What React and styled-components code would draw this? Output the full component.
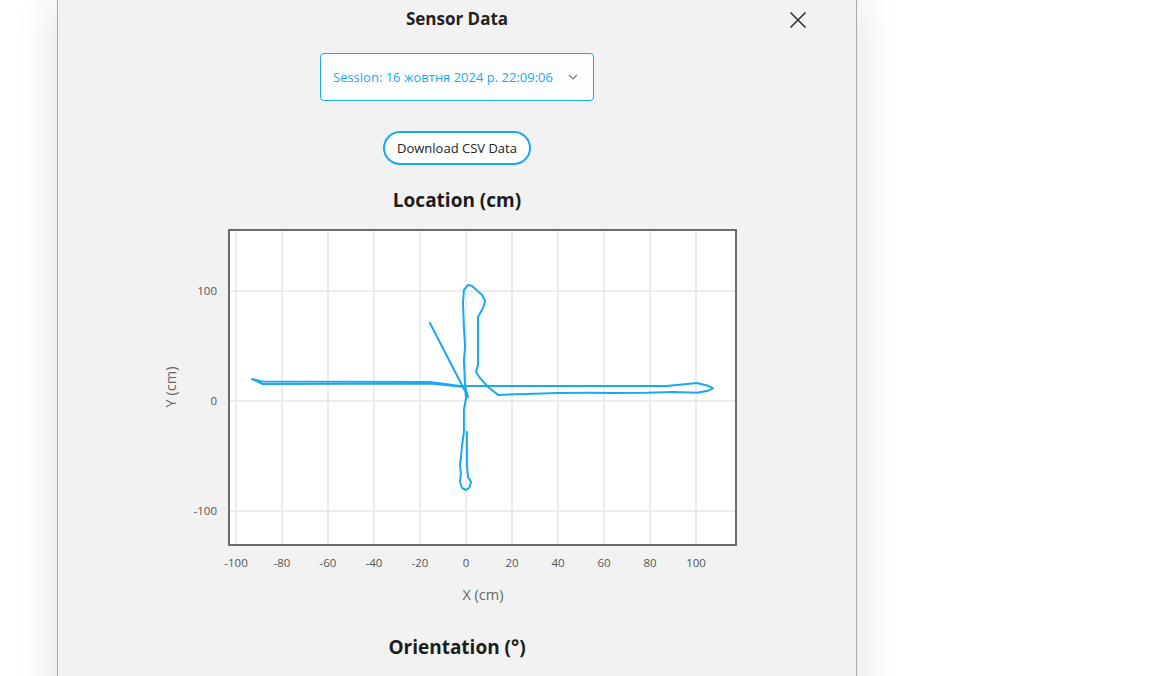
import React from "react";
import styled, { createGlobalStyle } from "styled-components";

const GlobalStyle = createGlobalStyle`
  html, body {
    margin: 0;
    padding: 0;
    background: #ffffff;
  }
  body {
    font-family: "Segoe UI", "Open Sans", "Noto Sans", sans-serif;
    color: #222;
  }
  #root {
    height: 676px;
    overflow: hidden;
  }
`;

const BLUE = "#1ba8ee";

// robot path, in cm
const path = [
  [0.4, -28.2], [0.4, -58.2], [0.9, -69.1], [2.2, -73.6], [1.3, -79.1],
  [0, -80.9], [-1.7, -79.1], [-2.6, -73.6], [-2.2, -65.5], [-2.6, -58.2],
  [-2.2, -51.8], [-1.7, -40], [-0.9, -28.2], [-0.9, -8.2], [0, 2.7],
  [-0.4, 12.7], [-15.7, 15.9], [-88.7, 15.5], [-93, 20], [-88.7, 17.7],
  [-15.7, 17.3], [-2.6, 13.6], [87.4, 13.6], [100.4, 16.4], [105.2, 13.9],
  [107.4, 11.5], [105.2, 9.4], [100.4, 7.5], [90, 8.2], [78.7, 7.5],
  [63.9, 7.3], [52.6, 7.5], [39.6, 7.3], [26.5, 6.4], [13.9, 5.5],
  [9.6, 12.7], [6.1, 20.9], [4.3, 26.4], [5.2, 32.7], [5.2, 76.4],
  [7.4, 84.5], [8.3, 90.9], [7, 96.4], [2.6, 104.5], [0.9, 105.5],
  [-0.9, 100.9], [-1.3, 89.1], [-0.9, 67.3], [-0.4, 49.1], [-0.9, 37.3],
  [-0.4, 12.7], [0.9, 3.6], [-15.7, 70.9],
];

const sx = (v) => 309 + v * 2.3;
const sy = (v) => 181 - v * 1.1;

const xTicks = [-100, -80, -60, -40, -20, 0, 20, 40, 60, 80, 100];
const yTicks = [100, 0, -100];

function LocationChart() {
  const d = path
    .map(([x, y], i) => `${i ? "L" : "M"}${sx(x).toFixed(1)} ${sy(y).toFixed(1)}`)
    .join(" ");

  return (
    <ChartSvg width="600" height="390" viewBox="0 0 600 390">
      <rect x="72" y="10" width="507" height="315" fill="#fff" />
      {xTicks.map((t) => (
        <line key={`gx${t}`} x1={sx(t)} x2={sx(t)} y1="10" y2="325" stroke="#ececec" strokeWidth="2" />
      ))}
      {yTicks.map((t) => (
        <line key={`gy${t}`} x1="72" x2="579" y1={sy(t)} y2={sy(t)} stroke="#ececec" strokeWidth="2" />
      ))}
      <path d={d} fill="none" stroke={BLUE} strokeWidth="2" strokeLinejoin="round" strokeLinecap="round" />
      <rect x="72" y="10" width="507" height="315" fill="none" stroke="#6b6b6b" strokeWidth="2" />
      {xTicks.map((t) => (
        <TickText key={`tx${t}`} x={sx(t)} y="347" textAnchor="middle">
          {t}
        </TickText>
      ))}
      {yTicks.map((t) => (
        <TickText key={`ty${t}`} x="60" y={sy(t) + 4} textAnchor="end">
          {t}
        </TickText>
      ))}
      <AxisText x="326" y="380" textAnchor="middle">X (cm)</AxisText>
      <AxisText x="19" y="167" textAnchor="middle" transform="rotate(-90 19 167)">
        Y (cm)
      </AxisText>
    </ChartSvg>
  );
}

export default function App() {
  return (
    <>
      <GlobalStyle />
      <Page>
        <Panel>
          <Header>
            <span />
            <Title>Sensor Data</Title>
            <CloseButton aria-label="Close">
              <svg width="18" height="18" viewBox="0 0 18 18">
                <path d="M1.5 1.5 L16.5 16.5 M16.5 1.5 L1.5 16.5" stroke="#333" strokeWidth="1.6" fill="none" />
              </svg>
            </CloseButton>
          </Header>

          <SessionSelect>
            <span>Session: 16 жовтня 2024 р. 22:09:06</span>
            <svg width="10" height="6" viewBox="0 0 10 6">
              <path d="M1 1 L5 5 L9 1" stroke="#777" strokeWidth="1.2" fill="none" />
            </svg>
          </SessionSelect>

          <DownloadButton>Download CSV Data</DownloadButton>

          <SectionTitle $top={22}>Location (cm)</SectionTitle>
          <LocationChart />
          <SectionTitle $top={24}>Orientation (°)</SectionTitle>
        </Panel>
      </Page>
    </>
  );
}

const Page = styled.div`
  display: flex;
  padding-left: 57px;
  height: 676px;
`;

const Panel = styled.div`
  box-sizing: border-box;
  width: 800px;
  min-height: 900px;
  background: #f2f2f2;
  border-left: 1px solid #a9a9a9;
  border-right: 1px solid #a9a9a9;
  box-shadow: 0 0 40px rgba(0, 0, 0, 0.13);
  display: flex;
  flex-direction: column;
  align-items: center;
`;

const Header = styled.div`
  width: 100%;
  display: grid;
  grid-template-columns: 1fr auto 1fr;
  align-items: center;
  padding-top: 8px;
`;

const Title = styled.h2`
  margin: 0;
  font-size: 17px;
  line-height: 22px;
  font-weight: 700;
  color: #222;
`;

const CloseButton = styled.button`
  justify-self: end;
  margin: 2px 48px 0 0;
  width: 20px;
  height: 20px;
  padding: 0;
  border: none;
  background: none;
  display: flex;
  align-items: center;
  justify-content: center;
  cursor: pointer;
`;

const SessionSelect = styled.div`
  box-sizing: border-box;
  margin-top: 23px;
  width: 274px;
  height: 48px;
  padding: 0 15px 0 12px;
  display: flex;
  align-items: center;
  justify-content: space-between;
  border: 1px solid ${BLUE};
  border-radius: 4px;
  background: #fcfdff;
  color: ${BLUE};
  font-size: 13px;
  white-space: nowrap;
`;

const DownloadButton = styled.button`
  box-sizing: border-box;
  margin-top: 30px;
  height: 34px;
  padding: 0 12px;
  border: 2px solid ${BLUE};
  border-radius: 17px;
  background: #fff;
  color: #222;
  font-family: inherit;
  font-size: 13px;
  cursor: pointer;
`;

const SectionTitle = styled.h3`
  margin: ${(p) => p.$top}px 0 0;
  font-size: 19px;
  line-height: 26px;
  font-weight: 700;
  color: #1c1c1c;
`;

const ChartSvg = styled.svg`
  display: block;
  margin-top: 7px;
  font-family: "Segoe UI", "Open Sans", "Noto Sans", sans-serif;
`;

const TickText = styled.text`
  font-size: 11.5px;
  fill: #555;
`;

const AxisText = styled.text`
  font-size: 14.5px;
  fill: #666;
`;
